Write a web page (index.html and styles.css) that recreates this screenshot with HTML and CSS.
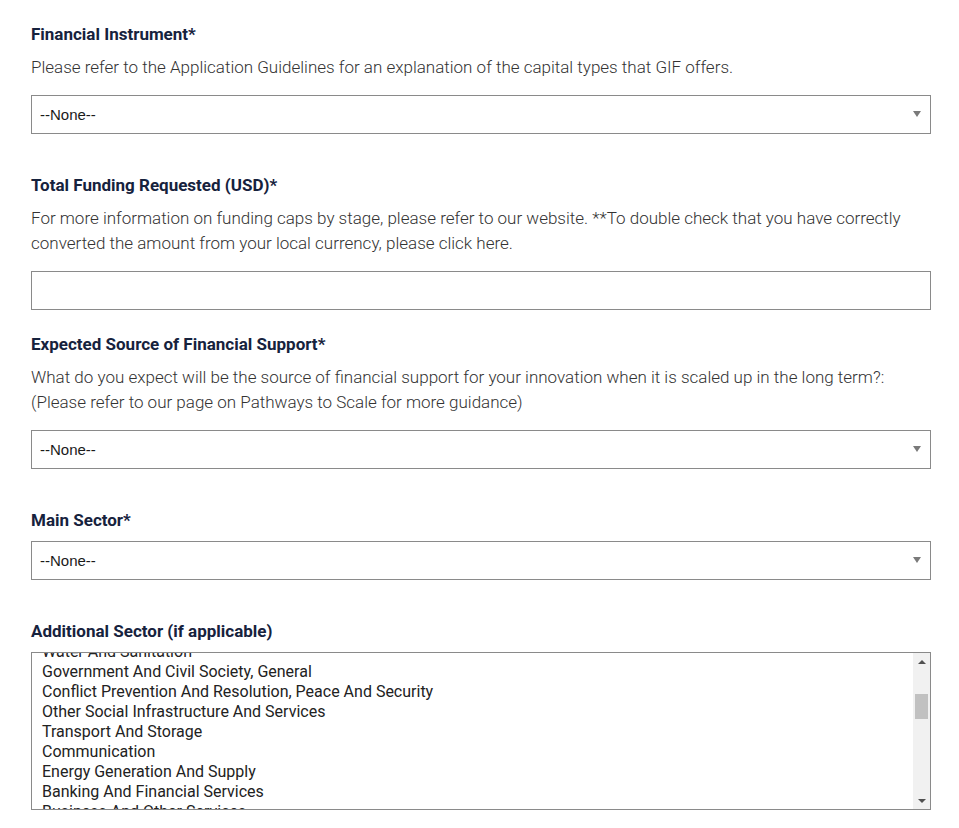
FILE: index.html
```html
<!DOCTYPE html>
<html lang="en">
<head>
<meta charset="utf-8">
<title>Application</title>
<link rel="stylesheet" href="styles.css">
</head>
<body>
<form class="form">
  <div class="field field-select">
    <label class="label">Financial Instrument*</label>
    <p class="help">Please refer to the Application Guidelines for an explanation of the capital types that GIF offers.</p>
    <div class="select-wrap"><select class="select"><option>--None--</option></select></div>
  </div>

  <div class="field field-input">
    <label class="label">Total Funding Requested (USD)*</label>
    <p class="help">For more information on funding caps by stage, please refer to our website. **To double check that you have correctly converted the amount from your local currency, please click here.</p>
    <input class="input" type="text">
  </div>

  <div class="field field-select">
    <label class="label">Expected Source of Financial Support*</label>
    <p class="help">What do you expect will be the source of financial support for your innovation when it is scaled up in the long term?: (Please refer to our page on Pathways to Scale for more guidance)</p>
    <div class="select-wrap"><select class="select"><option>--None--</option></select></div>
  </div>

  <div class="field field-select">
    <label class="label">Main Sector*</label>
    <div class="select-wrap"><select class="select"><option>--None--</option></select></div>
  </div>

  <div class="field">
    <label class="label">Additional Sector (if applicable)</label>
    <div class="listbox">
      <div class="listbox-view">
        <ul class="listbox-items">
          <li>Water And Sanitation</li>
          <li>Government And Civil Society, General</li>
          <li>Conflict Prevention And Resolution, Peace And Security</li>
          <li>Other Social Infrastructure And Services</li>
          <li>Transport And Storage</li>
          <li>Communication</li>
          <li>Energy Generation And Supply</li>
          <li>Banking And Financial Services</li>
          <li>Business And Other Services</li>
          <li>Agriculture</li>
        </ul>
      </div>
      <div class="scrollbar">
        <div class="sb-btn"><span class="tri tri-up"></span></div>
        <div class="sb-track"><div class="sb-thumb"></div></div>
        <div class="sb-btn"><span class="tri tri-down"></span></div>
      </div>
    </div>
  </div>
</form>
</body>
</html>
```

FILE: styles.css
```css
html, body {
  margin: 0;
  padding: 0;
  background: #ffffff;
}

body {
  font-family: Roboto, "Liberation Sans", Arial, sans-serif;
  font-size: 16px;
  color: #3a3a3a;
}

.form {
  width: 900px;
  padding: 24px 0 0 31px;
  display: flex;
  flex-direction: column;
}

.field {
  display: flex;
  flex-direction: column;
}

.field-select {
  margin-bottom: 41px;
}

.field-input {
  margin-bottom: 24px;
}

.label {
  display: block;
  font-weight: 700;
  font-size: 17px;
  line-height: 20px;
  color: #16223d;
  margin-bottom: 11px;
}

.help {
  margin: 0 0 15px 0;
  font-size: 17px;
  font-weight: 300;
  line-height: 25px;
  color: #333333;
}

.select-wrap {
  position: relative;
  height: 39px;
}

.select {
  appearance: none;
  -webkit-appearance: none;
  box-sizing: border-box;
  width: 900px;
  height: 39px;
  margin: 0;
  padding: 0 0 0 8px;
  border: 1px solid #8a8a8a;
  border-radius: 0;
  background: #ffffff;
  font-family: "Liberation Sans", Arial, sans-serif;
  font-size: 15px;
  color: #1a1a1a;
  outline: none;
}

.select-wrap::after {
  content: "";
  position: absolute;
  right: 10px;
  top: 16px;
  width: 0;
  height: 0;
  border-left: 4px solid transparent;
  border-right: 4px solid transparent;
  border-top: 6px solid #7a7a7a;
  pointer-events: none;
}

.input {
  box-sizing: border-box;
  width: 900px;
  height: 39px;
  margin: 0;
  padding: 0 8px;
  border: 1px solid #8a8a8a;
  border-radius: 0;
  background: #ffffff;
  font-family: "Liberation Sans", Arial, sans-serif;
  font-size: 15px;
  outline: none;
}

.listbox {
  box-sizing: border-box;
  width: 900px;
  height: 158px;
  border: 1px solid #8a8a8a;
  display: flex;
  background: #ffffff;
}

.listbox-view {
  flex: 1;
  overflow: hidden;
}

.listbox-items {
  list-style: none;
  margin: -11px 0 0 0;
  padding: 0 0 0 10px;
  font-size: 16px;
  line-height: 20px;
  color: #222222;
}

.scrollbar {
  width: 17px;
  background: #f1f1f1;
  display: flex;
  flex-direction: column;
}

.sb-btn {
  height: 17px;
  display: flex;
  align-items: center;
  justify-content: center;
}

.sb-track {
  flex: 1;
  padding: 24px 2px 0 2px;
}

.sb-thumb {
  height: 25px;
  background: #c1c1c1;
}

.tri {
  width: 0;
  height: 0;
  border-left: 4px solid transparent;
  border-right: 4px solid transparent;
}

.tri-up {
  border-bottom: 4px solid #505050;
}

.tri-down {
  border-top: 4px solid #505050;
}
```
